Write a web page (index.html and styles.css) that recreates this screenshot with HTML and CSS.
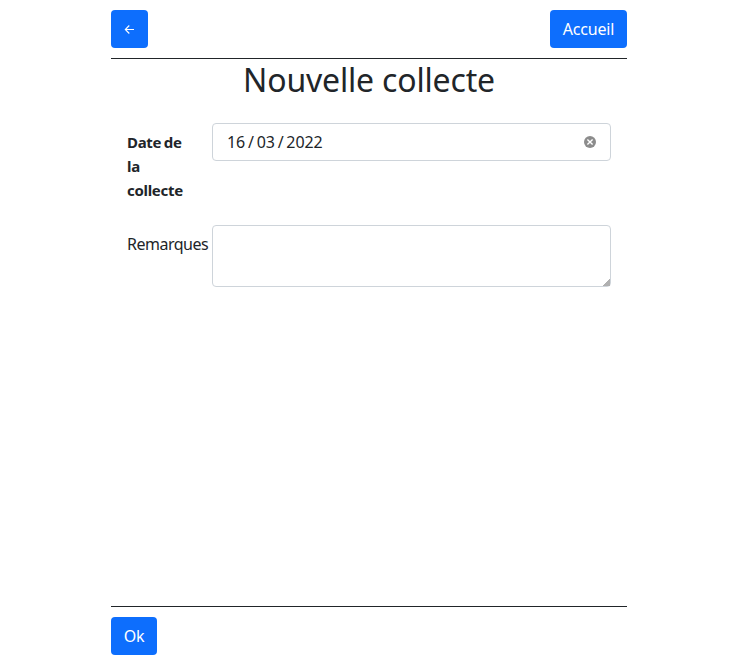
FILE: index.html
```html
<!DOCTYPE html>
<html lang="fr">
<head>
<meta charset="utf-8">
<title>Nouvelle collecte</title>
<link rel="stylesheet" href="styles.css">
</head>
<body>
<div class="page">
  <header class="bar bar-top">
    <button class="btn btn-back" type="button" aria-label="Retour"><svg width="11" height="10" viewBox="0 0 11 10"><path d="M10 5.5H1.5M5.3 1.5 1.3 5.5l4 4" fill="none" stroke="currentColor" stroke-width="1.1"/></svg></button>
    <button class="btn btn-home" type="button"><span>Accueil</span></button>
  </header>
  <main>
    <h1>Nouvelle collecte</h1>
    <form class="form">
      <div class="row row-date">
        <div class="label required">Date de<br>la<br>collecte</div>
        <div class="control date">
          <span class="value">16 / 03 / 2022</span>
          <svg width="12" height="12" viewBox="0 0 12 12"><circle cx="6" cy="6" r="6" fill="#8c8c8c"/><path d="m3.4 3.4 5.2 5.2m0-5.2L3.4 8.6" stroke="#fff" stroke-width="1.4"/></svg>
        </div>
      </div>
      <div class="row">
        <div class="label">Remarques</div>
        <textarea class="control" aria-label="Remarques"></textarea>
      </div>
    </form>
  </main>
  <footer class="bar bar-bottom">
    <button class="btn btn-ok" type="button"><span>Ok</span></button>
  </footer>
</div>
</body>
</html>
```
FILE: styles.css
```css
* { box-sizing: border-box; }
body {
  margin: 0;
  background: #fff;
  color: #212529;
  font: 400 16px/24px "Noto Sans", sans-serif;
}
.page {
  width: 516px;
  height: 665px;
  margin: 0 auto;
  display: flex;
  flex-direction: column;
}
main { flex: 1; }
.bar { display: flex; justify-content: space-between; padding: 10px 0; }
.bar-top { border-bottom: 1px solid #212529; }
.bar-bottom { border-top: 1px solid #212529; }
.btn {
  display: flex;
  align-items: center;
  justify-content: center;
  height: 38px;
  padding: 0;
  border: 0;
  border-radius: 4px;
  background: #0d6efd;
  color: #fff;
  font: inherit;
  letter-spacing: -0.2px;
}
.btn-back { width: 37px; }
.btn-home { width: 77px; }
.btn-ok { width: 46px; }
h1 {
  margin: 0;
  height: 40px;
  font-size: 32px;
  font-weight: 400;
  line-height: 42px;
  letter-spacing: -0.18px;
  text-align: center;
  white-space: nowrap;
}
.form { padding: 24px 16px 0; }
.row { display: grid; grid-template-columns: 85px 399px; }
.row-date { height: 102px; }
.label { padding-top: 7px; white-space: nowrap; letter-spacing: -0.5px; }
.required { font-size: 15px; font-weight: 700; letter-spacing: -0.3px; word-spacing: -1px; }
.control {
  border: 1px solid #ced4da;
  border-radius: 4px;
  background: #fff;
}
.date {
  display: flex;
  align-items: center;
  justify-content: space-between;
  height: 38px;
  padding: 0 14px;
}
.value { white-space: pre; letter-spacing: -0.1px; word-spacing: -1.2px; }
textarea {
  display: block;
  width: 399px;
  height: 62px;
  margin: 0;
  resize: vertical;
}
textarea::-webkit-resizer {
  background: linear-gradient(135deg, transparent 76%, #b0b0b0 76%);
}
```
